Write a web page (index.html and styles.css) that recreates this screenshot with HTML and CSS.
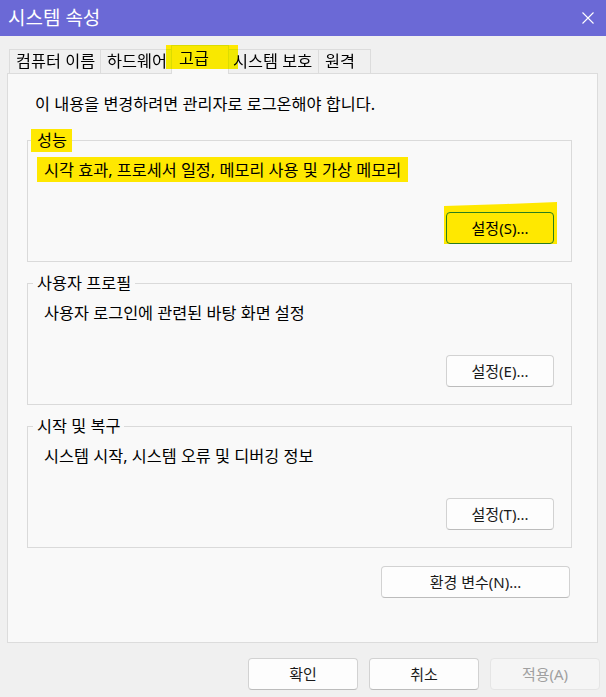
FILE: index.html
```html
<!DOCTYPE html>
<html lang="ko">
<head>
<meta charset="utf-8">
<title>시스템 속성</title>
<link rel="stylesheet" href="styles.css">
</head>
<body>
<div class="window">
  <div class="titlebar">
    <span class="title">시스템 속성</span>
    <svg class="close" width="12" height="12" viewBox="0 0 12 12"><path d="M0.5 0.5 L11.5 11.5 M11.5 0.5 L0.5 11.5" stroke="#fff" stroke-width="1.1" fill="none"/></svg>
  </div>
  <div class="tabs">
    <div class="tab t1">컴퓨터 이름</div>
    <div class="tab t2">하드웨어</div>
    <div class="tab t3 active"><span class="tab-text">고급</span></div>
    <div class="tab t4">시스템 보호</div>
    <div class="tab t5">원격</div>
  </div>
  <div class="panel">
    <p class="intro">이 내용을 변경하려면 관리자로 로그온해야 합니다.</p>
    <div class="group first">
      <span class="group-label hl-label">성능</span>
      <p class="desc"><span class="hl-text">시각 효과, 프로세서 일정, 메모리 사용 및 가상 메모리</span></p>
      <div class="hl-wrap"><button class="btn small hl-btn">설정(S)...</button></div>
    </div>
    <div class="group">
      <span class="group-label">사용자 프로필</span>
      <p class="desc">사용자 로그인에 관련된 바탕 화면 설정</p>
      <button class="btn small">설정(E)...</button>
    </div>
    <div class="group">
      <span class="group-label">시작 및 복구</span>
      <p class="desc">시스템 시작, 시스템 오류 및 디버깅 정보</p>
      <button class="btn small">설정(T)...</button>
    </div>
    <div class="env-row">
      <button class="btn env">환경 변수(N)...</button>
    </div>
  </div>
  <div class="footer">
    <button class="btn foot">확인</button>
    <button class="btn foot">취소</button>
    <button class="btn foot disabled">적용(A)</button>
  </div>
</div>
</body>
</html>
```

FILE: styles.css
```css
* { box-sizing: border-box; }
html, body { margin: 0; padding: 0; }
body {
  width: 606px;
  height: 697px;
  background: #f0f0f0;
  font-family: "Noto Sans", "Noto Sans CJK KR", sans-serif;
  font-size: 16.3px;
  color: #000;
  overflow: hidden;
}
.window { width: 606px; height: 697px; }

.titlebar {
  height: 36px;
  background: #6b69d6;
  display: flex;
  align-items: center;
  justify-content: space-between;
  padding: 0 12px 0 8px;
}
.title {
  color: #fff;
  font-size: 19px;
  line-height: 36px;
}
.close { display: block; }

.tabs {
  display: flex;
  align-items: flex-end;
  height: 37px;
  padding-left: 9px;
  position: relative;
  z-index: 2;
}
.tab {
  height: 24px;
  line-height: 23px;
  padding-left: 6px;
  background: #f0f0f0;
  border: 1px solid #dcdcdc;
  border-bottom: none;
  margin-right: -1px;
  white-space: nowrap;
}
.t1 { width: 92px; }
.t2 { width: 72px; }
.t3 { width: 58px; }
.t4 { width: 91px; padding-left: 4px; }
.t5 { width: 53px; }
.tab.active {
  height: 29px;
  margin-bottom: -1px;
  background: #f9f9f9;
  position: relative;
  line-height: 24px;
  padding-left: 7px;
}
.tab.active::after {
  content: "";
  position: absolute;
  left: -6px;
  right: -10px;
  top: -1px;
  height: 24px;
  background: #ffe800;
  mix-blend-mode: darken;
  z-index: 3;
}

.panel {
  margin: 0 8px 0 7px;
  height: 570px;
  background: #f9f9f9;
  border: 1px solid #dcdcdc;
  padding: 20px 25px 0 19px;
  position: relative;
  z-index: 1;
}
.intro {
  margin: 0 0 26px 8px;
  line-height: 20px;
}

.group {
  position: relative;
  height: 122px;
  border: 1px solid #dadada;
  padding: 19px 17px 17px 16px;
  display: flex;
  flex-direction: column;
  justify-content: space-between;
  margin-bottom: 21px;
}
.group-label {
  position: absolute;
  top: -12px;
  left: 5px;
  padding: 0 4px;
  line-height: 23px;
  background: #f9f9f9;
}
.group-label.hl-label {
  left: 3px;
  padding: 0 5px 0 6px;
  background: #ffe800;
}
.desc {
  margin: 0;
  line-height: 20px;
}
.hl-text {
  display: inline-block;
  background: #ffe800;
  padding: 3px 7px 2px 7px;
  margin: -3px -7px -2px -7px;
}

.btn {
  font-family: "Noto Sans", "Noto Sans CJK KR", sans-serif;
  font-size: 15px;
  color: #1a1a1a;
  background: #fdfdfd;
  border: 1px solid #d2d2d2;
  border-bottom-color: #bcbcbc;
  border-radius: 4px;
  height: 32px;
  padding: 0;
  line-height: 28px;
}
.btn.small {
  width: 108px;
  align-self: flex-end;
}
.hl-wrap {
  align-self: flex-end;
  background: #ffe800;
  padding: 10px 3px 0 2px;
  margin: -10px -3px 0 -2px;
  clip-path: polygon(0 4px, 55% 2px, 100% 0, 100% 100%, 0 100%);
}
.hl-btn {
  display: block;
  background: #ffe800;
  border: 1px solid #2a7d1e;
  color: #000;
}

.env-row {
  display: flex;
  justify-content: flex-end;
  margin-top: -3px;
  padding-right: 2px;
}
.btn.env { width: 189px; }

.footer {
  display: flex;
  justify-content: flex-end;
  gap: 11px;
  padding: 15px 6px 0 0;
}
.btn.foot { width: 110px; }
.btn.disabled {
  background: #f5f5f5;
  border-color: #e5e5e5;
  color: #a0a0a0;
}
```
